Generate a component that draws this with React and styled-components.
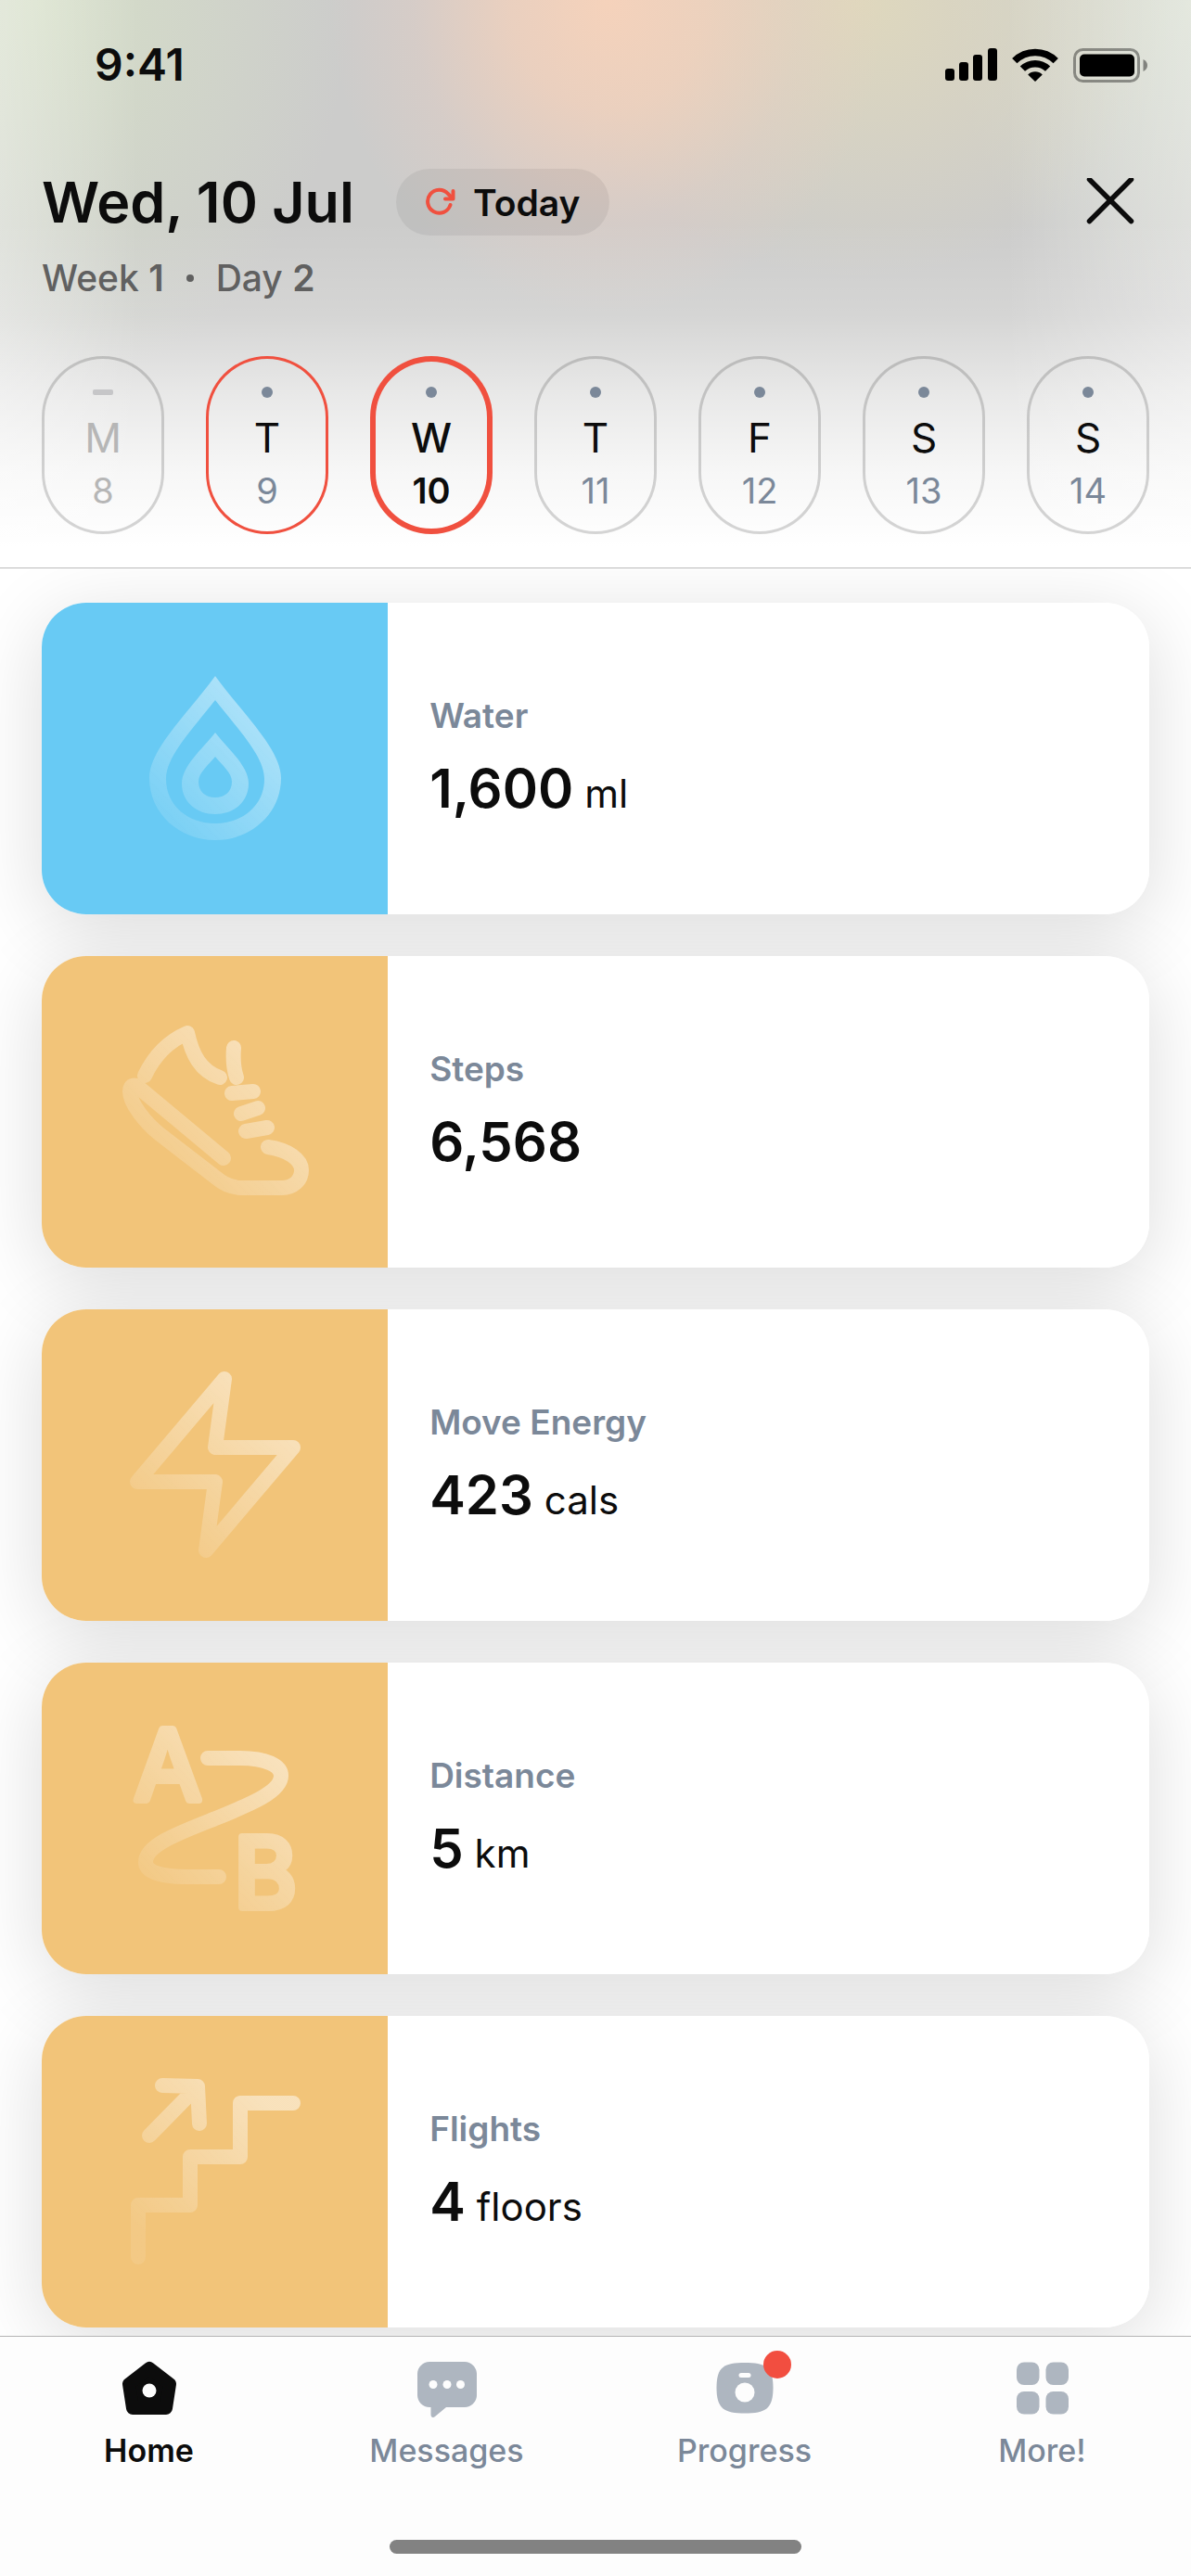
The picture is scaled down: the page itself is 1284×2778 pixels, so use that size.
import React, { useState } from "react";
import styled, { createGlobalStyle, css } from "styled-components";

const GlobalStyle = createGlobalStyle`
  * {
    box-sizing: border-box;
  }
  body {
    margin: 0;
    background: #ffffff;
    color: #0c0c0c;
    font-family: Inter, "Liberation Sans", sans-serif;
  }
  button {
    padding: 0;
    border: none;
    background: none;
    color: inherit;
    font: inherit;
    cursor: pointer;
  }
  svg {
    display: block;
    flex-shrink: 0;
  }
`;

const Screen = styled.div`
  display: flex;
  flex-direction: column;
  min-height: 100vh;
`;

// --- Header ---

const Header = styled.header`
  padding: 40px 45px 36px;
  border-bottom: 1px solid #bcbcbc;
  background:
    linear-gradient(
      to right,
      rgba(255, 255, 255, 0.34) 0,
      rgba(255, 255, 255, 0) 150px,
      rgba(255, 255, 255, 0) calc(100% - 200px),
      rgba(255, 255, 255, 0.34) 100%
    ),
    linear-gradient(
      to bottom,
      rgba(255, 255, 255, 0) 240px,
      rgba(255, 255, 255, 0.18) 340px,
      rgba(255, 255, 255, 0.58) 430px,
      rgba(255, 255, 255, 0.84) 510px,
      #ffffff 590px
    ),
    radial-gradient(300px 340px at 51% 0, #f5d2bb 0, rgba(244, 209, 187, 0.75) 35%, rgba(236, 205, 192, 0.3) 70%, rgba(230, 205, 195, 0) 100%),
    radial-gradient(340px 420px at 3% 0, #d6dfc8 0, rgba(214, 223, 200, 0) 100%),
    radial-gradient(340px 300px at 72% 0, #dfd8bd 0, rgba(223, 216, 189, 0) 100%),
    radial-gradient(260px 340px at 100% 0, #d6dcce 0, rgba(214, 220, 206, 0) 100%),
    #cccccb;
`;

const StatusBar = styled.div`
  display: flex;
  align-items: center;
  justify-content: space-between;
  height: 60px;
  padding: 0 2px 0 57px;
`;

const Clock = styled.span`
  font-size: 48px;
  font-weight: 600;
  line-height: 60px;
`;

const StatusIcons = styled.div`
  display: flex;
  align-items: center;
  gap: 16px;
`;

const TitleRow = styled.div`
  display: flex;
  align-items: center;
  gap: 45px;
  margin-top: 82px;
`;

const Title = styled.h1`
  margin: 0;
  font-size: 61px;
  font-weight: 600;
  line-height: 72px;
`;

const TodayButton = styled.button`
  display: flex;
  align-items: center;
  gap: 19px;
  height: 72px;
  padding: 0 32px;
  border-radius: 36px;
  background: rgba(0, 0, 0, 0.06);
  font-size: 39px;
  font-weight: 600;
`;

const CloseButton = styled.button`
  display: flex;
  align-items: center;
  justify-content: center;
  width: 84px;
  height: 72px;
  margin-left: auto;
`;

const Subtitle = styled.p`
  display: flex;
  align-items: center;
  gap: 24px;
  margin: 22px 0 0;
  color: #606060;
  font-size: 39px;
  font-weight: 500;
  line-height: 48px;

  strong {
    font-weight: 600;
  }
`;

const Separator = styled.span`
  width: 8px;
  height: 8px;
  border-radius: 50%;
  background: currentColor;
`;

const Days = styled.div`
  display: flex;
  justify-content: space-between;
  margin-top: 60px;
`;

const ringStyles = {
  plain: css`
    box-shadow: inset 0 0 0 3px rgba(0, 0, 0, 0.16);
  `,
  done: css`
    box-shadow: inset 0 0 0 3px #f0503f;
  `,
  selected: css`
    box-shadow: inset 0 0 0 6px #f0503f;
  `,
};

const DayButton = styled.button`
  display: flex;
  flex-direction: column;
  align-items: center;
  width: 132px;
  height: 192px;
  padding-top: 33px;
  border-radius: 66px;
  color: ${(props) => (props.$muted ? "#b6b6b6" : "#0c0c0c")};
  ${(props) => ringStyles[props.$ring]}
`;

const DayMarker = styled.span`
  width: ${(props) => (props.$muted ? "22px" : "12px")};
  height: ${(props) => (props.$muted ? "6px" : "12px")};
  margin: ${(props) => (props.$muted ? "3px 0" : "0")};
  border-radius: ${(props) => (props.$muted ? "2px" : "50%")};
  background: ${(props) => (props.$muted ? "#c6c6c8" : "#7b8899")};
`;

const DayLetter = styled.span`
  margin-top: 17px;
  font-size: 44px;
  font-weight: ${(props) => (props.$selected ? 500 : 400)};
  line-height: 52px;
`;

const DayNumber = styled.span`
  margin-top: 7px;
  color: ${(props) => (props.$muted || props.$selected ? "inherit" : "#7b8899")};
  font-size: 38px;
  font-weight: ${(props) => (props.$selected ? 600 : 400)};
  line-height: 48px;
`;

// --- Cards ---

const CardList = styled.main`
  position: relative;
  z-index: 0;
  display: flex;
  flex: 1;
  flex-direction: column;
  gap: 45px;
  padding: 37px 45px 9px;
  overflow: hidden;
`;

const Card = styled.article`
  position: relative;
  display: grid;
  grid-template-columns: 5fr 11fr;
  height: 336px;

  /* the shadow sits below every card, so it never falls on a neighbour */
  &::before {
    content: "";
    position: absolute;
    inset: 0;
    z-index: -1;
    border-radius: 48px;
    box-shadow: 0 16px 84px rgba(0, 0, 0, 0.14);
  }
`;

const CardArt = styled.div`
  display: flex;
  align-items: center;
  justify-content: center;
  border-radius: 48px 0 0 48px;
  background: ${(props) => props.$color};
`;

const CardBody = styled.div`
  display: flex;
  flex-direction: column;
  justify-content: center;
  gap: 20px;
  padding-left: 45px;
  border-radius: 0 48px 48px 0;
  background: #ffffff;
`;

const CardLabel = styled.h2`
  margin: 0;
  color: #7b8899;
  font-size: 37px;
  font-weight: 600;
  line-height: 44px;
`;

const CardValue = styled.p`
  display: flex;
  align-items: baseline;
  gap: 12px;
  margin: 0;
  font-size: 58px;
  font-weight: 600;
  line-height: 72px;
`;

const Unit = styled.span`
  font-size: 42px;
  font-weight: 400;
  line-height: 48px;
`;

// --- Tab bar ---

const TabBar = styled.footer`
  position: sticky;
  bottom: 0;
  z-index: 1;
  padding: 20px 0 24px;
  border-top: 1px solid #b4b4b4;
  background: #fdfdfd;
`;

const Tabs = styled.nav`
  display: grid;
  grid-template-columns: repeat(4, 1fr);
`;

const Tab = styled.a`
  display: flex;
  flex-direction: column;
  align-items: center;
  gap: 11px;
  color: ${(props) => (props.$active ? "#0c0c0c" : "#7b8899")};
  font-size: 34px;
  font-weight: ${(props) => (props.$active ? 600 : 500)};
  line-height: 40px;
  text-decoration: none;
`;

const TabIcon = styled.span`
  position: relative;
  color: ${(props) => (props.$active ? "#0c0c0c" : "#aeb6c0")};
`;

const Badge = styled.span`
  position: absolute;
  top: -5px;
  right: -14px;
  width: 30px;
  height: 30px;
  border-radius: 50%;
  background: #f24e40;
`;

const HomeIndicator = styled.div`
  width: 444px;
  height: 15px;
  margin: 76px auto 0;
  border-radius: 8px;
  background: #828282;
`;

// --- Icons ---

const SignalIcon = () => (
  <svg width="56" height="36" viewBox="0 0 56 36" aria-hidden="true">
    <rect x="0" y="22" width="10" height="13" rx="3" />
    <rect x="15" y="15" width="10" height="20" rx="3" />
    <rect x="30" y="7" width="10" height="28" rx="3" />
    <rect x="46" y="0" width="10" height="35" rx="3" />
  </svg>
);

const WifiIcon = () => (
  <svg width="50" height="36" viewBox="0 0 50 36" aria-hidden="true">
    <g fill="none" stroke="#000" strokeWidth="7.5">
      <path d="M2.8 13.6A31.5 31.5 0 0 1 47.2 13.6" />
      <path d="M11.4 22.2A19.4 19.4 0 0 1 38.6 22.2" />
    </g>
    <path d="M17.2 28.4A11 11 0 0 1 32.8 28.4L25 36Z" />
  </svg>
);

const BatteryIcon = () => (
  <svg width="80" height="37" viewBox="0 0 80 37" aria-hidden="true">
    <rect x="1.5" y="1.5" width="69" height="34" rx="9" fill="none" stroke="#000" strokeOpacity="0.38" strokeWidth="3" />
    <rect x="7" y="6.5" width="59" height="24" rx="5" />
    <path d="M75.5 12C78.5 13.3 80 15.6 80 18.5S78.5 23.7 75.5 25Z" fillOpacity="0.42" />
  </svg>
);

const RefreshIcon = () => (
  <svg width="32" height="32" viewBox="0 0 32 32" fill="none" stroke="#f0503f" strokeWidth="4" strokeLinecap="round" strokeLinejoin="round" aria-hidden="true">
    <path d="M26.5 19A12.5 12.5 0 1 1 24 7L29 12" />
    <path d="M29.5 4V12.5H21" />
  </svg>
);

const CloseIcon = () => (
  <svg width="52" height="52" viewBox="0 0 52 52" fill="none" stroke="#0c0c0c" strokeWidth="5.5" strokeLinecap="round" aria-hidden="true">
    <path d="M3.5 1.5L48.5 46.5M48.5 1.5L3.5 46.5" />
  </svg>
);

// The drawing is a mask over one gradient, so crossing strokes stay even.
const FadedIcon = ({ name, children }) => (
  <svg width="224" height="224" viewBox="-12 -12 224 224" aria-hidden="true">
    <defs>
      <linearGradient id={`${name}-fade`} gradientUnits="userSpaceOnUse" x1="165" y1="40" x2="30" y2="175">
        <stop offset="0" stopColor="#fff" stopOpacity="0.5" />
        <stop offset="1" stopColor="#fff" stopOpacity="0.09" />
      </linearGradient>
      <mask id={`${name}-shape`} maskUnits="userSpaceOnUse" x="-12" y="-12" width="224" height="224">
        <g fill="none" stroke="#fff" strokeWidth="16" strokeLinecap="round" strokeLinejoin="round">
          {children}
        </g>
      </mask>
    </defs>
    <rect x="-12" y="-12" width="224" height="224" fill={`url(#${name}-fade)`} mask={`url(#${name}-shape)`} />
  </svg>
);

const WaterIcon = () => (
  <FadedIcon name="water">
    <g fill="#fff" fillRule="evenodd" stroke="none">
      <path d="M100 11C70 52 29 90 29 121C29 160 62 188 100 188S171 160 171 121C171 90 130 52 100 11ZM100 37C74 70 47 98 47 122C47 151 71 170 100 170S153 151 153 122C153 98 126 70 100 37Z" />
      <path d="M100 72C86 90 64 108 64 127C64 147 80 160 100 160S136 147 136 127C136 108 114 90 100 72ZM100 98C93 107 82 115 82 125C82 136 90 142 100 142S118 136 118 125C118 115 107 107 100 98Z" />
    </g>
  </FadedIcon>
);

const StepsIcon = () => (
  <FadedIcon name="steps">
    <path d="M24 61C34 40 49 24 70 15C75 38 84 56 105 63" />
    <path d="M120 31C119 43 120 54 123 63" />
    <path d="M118 80L141 78M128 102L146 96M133 121L156 117" />
    <path d="M157 138C178 141 193 151 193 163C193 174 184 182 172 182H130C118 182 109 178 101 171L40 124C25 112 8 91 8 78C8 70 14 70 19 75L109 150" />
  </FadedIcon>
);

const EnergyIcon = () => (
  <FadedIcon name="energy">
    <path d="M110 7L100 81H184L90 192L100 118H16Z" />
  </FadedIcon>
);

const RouteLetter = styled.text`
  fill: #ffffff;
  stroke-width: 8px;
  font-size: 104px;
  font-weight: 400;
  text-anchor: middle;
`;

const DistanceIcon = () => (
  <FadedIcon name="distance">
    <RouteLetter x="49" y="80">A</RouteLetter>
    <RouteLetter x="154" y="196">B</RouteLetter>
    <path d="M92 35H127C155 35 171 43 171 54C171 72 135 86 98 101C60 116 25 129 25 147C25 158 42 163 70 163H104" />
  </FadedIcon>
);

const FlightsIcon = () => (
  <FadedIcon name="flights">
    <path d="M17 192V136H73V84H127V26H184" />
    <path d="M29 61L81 8M43 7L81 8L83 48" />
  </FadedIcon>
);

const HomeIcon = () => (
  <svg width="72" height="72" viewBox="0 0 72 72" fill="currentColor" aria-hidden="true">
    <path d="M36 14L58 31L54 57H18L14 31Z" stroke="currentColor" strokeWidth="14" strokeLinejoin="round" />
    <circle cx="36" cy="38" r="7.5" fill="#fdfdfd" />
  </svg>
);

const MessagesIcon = () => (
  <svg width="72" height="72" viewBox="0 0 72 72" fill="currentColor" aria-hidden="true">
    <path d="M17 7H55C62 7 68 13 68 20V43C68 50 62 56 55 56H35L23 66C21 68 18.5 67 18.5 64V56H17C10 56 4 50 4 43V20C4 13 10 7 17 7Z" />
    <g fill="#fdfdfd">
      <circle cx="21" cy="31.5" r="4.5" />
      <circle cx="36" cy="31.5" r="4.5" />
      <circle cx="50.5" cy="31.5" r="4.5" />
    </g>
  </svg>
);

const ProgressIcon = () => (
  <svg width="72" height="72" viewBox="0 0 72 72" fill="currentColor" aria-hidden="true">
    <path d="M36 8C58 8 66.5 12 66.5 35S58 62.5 36 62.5S5.5 58 5.5 35S14 8 36 8Z" />
    <rect x="29.5" y="19" width="13" height="5" rx="2.5" fill="#fdfdfd" />
    <circle cx="36" cy="40" r="10.5" fill="#fdfdfd" />
  </svg>
);

const MoreIcon = () => (
  <svg width="72" height="72" viewBox="0 0 72 72" fill="currentColor" aria-hidden="true">
    <rect x="8" y="7.5" width="24.5" height="24.5" rx="8" />
    <rect x="39.5" y="7.5" width="24.5" height="24.5" rx="8" />
    <rect x="8" y="39" width="24.5" height="24.5" rx="8" />
    <rect x="39.5" y="39" width="24.5" height="24.5" rx="8" />
  </svg>
);

// --- Data ---

const days = [
  { letter: "M", number: 8, muted: true },
  { letter: "T", number: 9, done: true },
  { letter: "W", number: 10 },
  { letter: "T", number: 11 },
  { letter: "F", number: 12 },
  { letter: "S", number: 13 },
  { letter: "S", number: 14 },
];

const metrics = [
  { label: "Water", value: "1,600", unit: "ml", color: "#68caf4", Icon: WaterIcon },
  { label: "Steps", value: "6,568", color: "#f2c479", Icon: StepsIcon },
  { label: "Move Energy", value: "423", unit: "cals", color: "#f2c479", Icon: EnergyIcon },
  { label: "Distance", value: "5", unit: "km", color: "#f2c479", Icon: DistanceIcon },
  { label: "Flights", value: "4", unit: "floors", color: "#f2c479", Icon: FlightsIcon },
];

const tabs = [
  { label: "Home", Icon: HomeIcon, active: true },
  { label: "Messages", Icon: MessagesIcon },
  { label: "Progress", Icon: ProgressIcon, badge: true },
  { label: "More!", Icon: MoreIcon },
];

const App = () => {
  const [selectedDay, setSelectedDay] = useState(10);

  const getRing = (day) => {
    if (day.number === selectedDay) return "selected";
    return day.done ? "done" : "plain";
  };

  return (
    <Screen>
      <GlobalStyle />
      <Header>
        <StatusBar>
          <Clock>9:41</Clock>
          <StatusIcons>
            <SignalIcon />
            <WifiIcon />
            <BatteryIcon />
          </StatusIcons>
        </StatusBar>
        <TitleRow>
          <Title>Wed, 10 Jul</Title>
          <TodayButton type="button" onClick={() => setSelectedDay(10)}>
            <RefreshIcon />
            Today
          </TodayButton>
          <CloseButton type="button" aria-label="Close">
            <CloseIcon />
          </CloseButton>
        </TitleRow>
        <Subtitle>
          <span>Week <strong>1</strong></span>
          <Separator />
          <span>Day <strong>2</strong></span>
        </Subtitle>
        <Days>
          {days.map((day) => {
            const selected = day.number === selectedDay;
            return (
              <DayButton
                key={day.number}
                type="button"
                aria-pressed={selected}
                $muted={day.muted}
                $ring={getRing(day)}
                onClick={() => setSelectedDay(day.number)}
              >
                <DayMarker $muted={day.muted} />
                <DayLetter $selected={selected}>{day.letter}</DayLetter>
                <DayNumber $muted={day.muted} $selected={selected}>{day.number}</DayNumber>
              </DayButton>
            );
          })}
        </Days>
      </Header>

      <CardList>
        {metrics.map(({ label, value, unit, color, Icon }) => (
          <Card key={label}>
            <CardArt $color={color}>
              <Icon />
            </CardArt>
            <CardBody>
              <CardLabel>{label}</CardLabel>
              <CardValue>
                {value}
                {unit && <Unit>{unit}</Unit>}
              </CardValue>
            </CardBody>
          </Card>
        ))}
      </CardList>

      <TabBar>
        <Tabs>
          {tabs.map(({ label, Icon, active, badge }) => (
            <Tab key={label} href={`#${label.toLowerCase()}`} $active={active}>
              <TabIcon $active={active}>
                <Icon />
                {badge && <Badge />}
              </TabIcon>
              {label}
            </Tab>
          ))}
        </Tabs>
        <HomeIndicator />
      </TabBar>
    </Screen>
  );
};

export default App;
